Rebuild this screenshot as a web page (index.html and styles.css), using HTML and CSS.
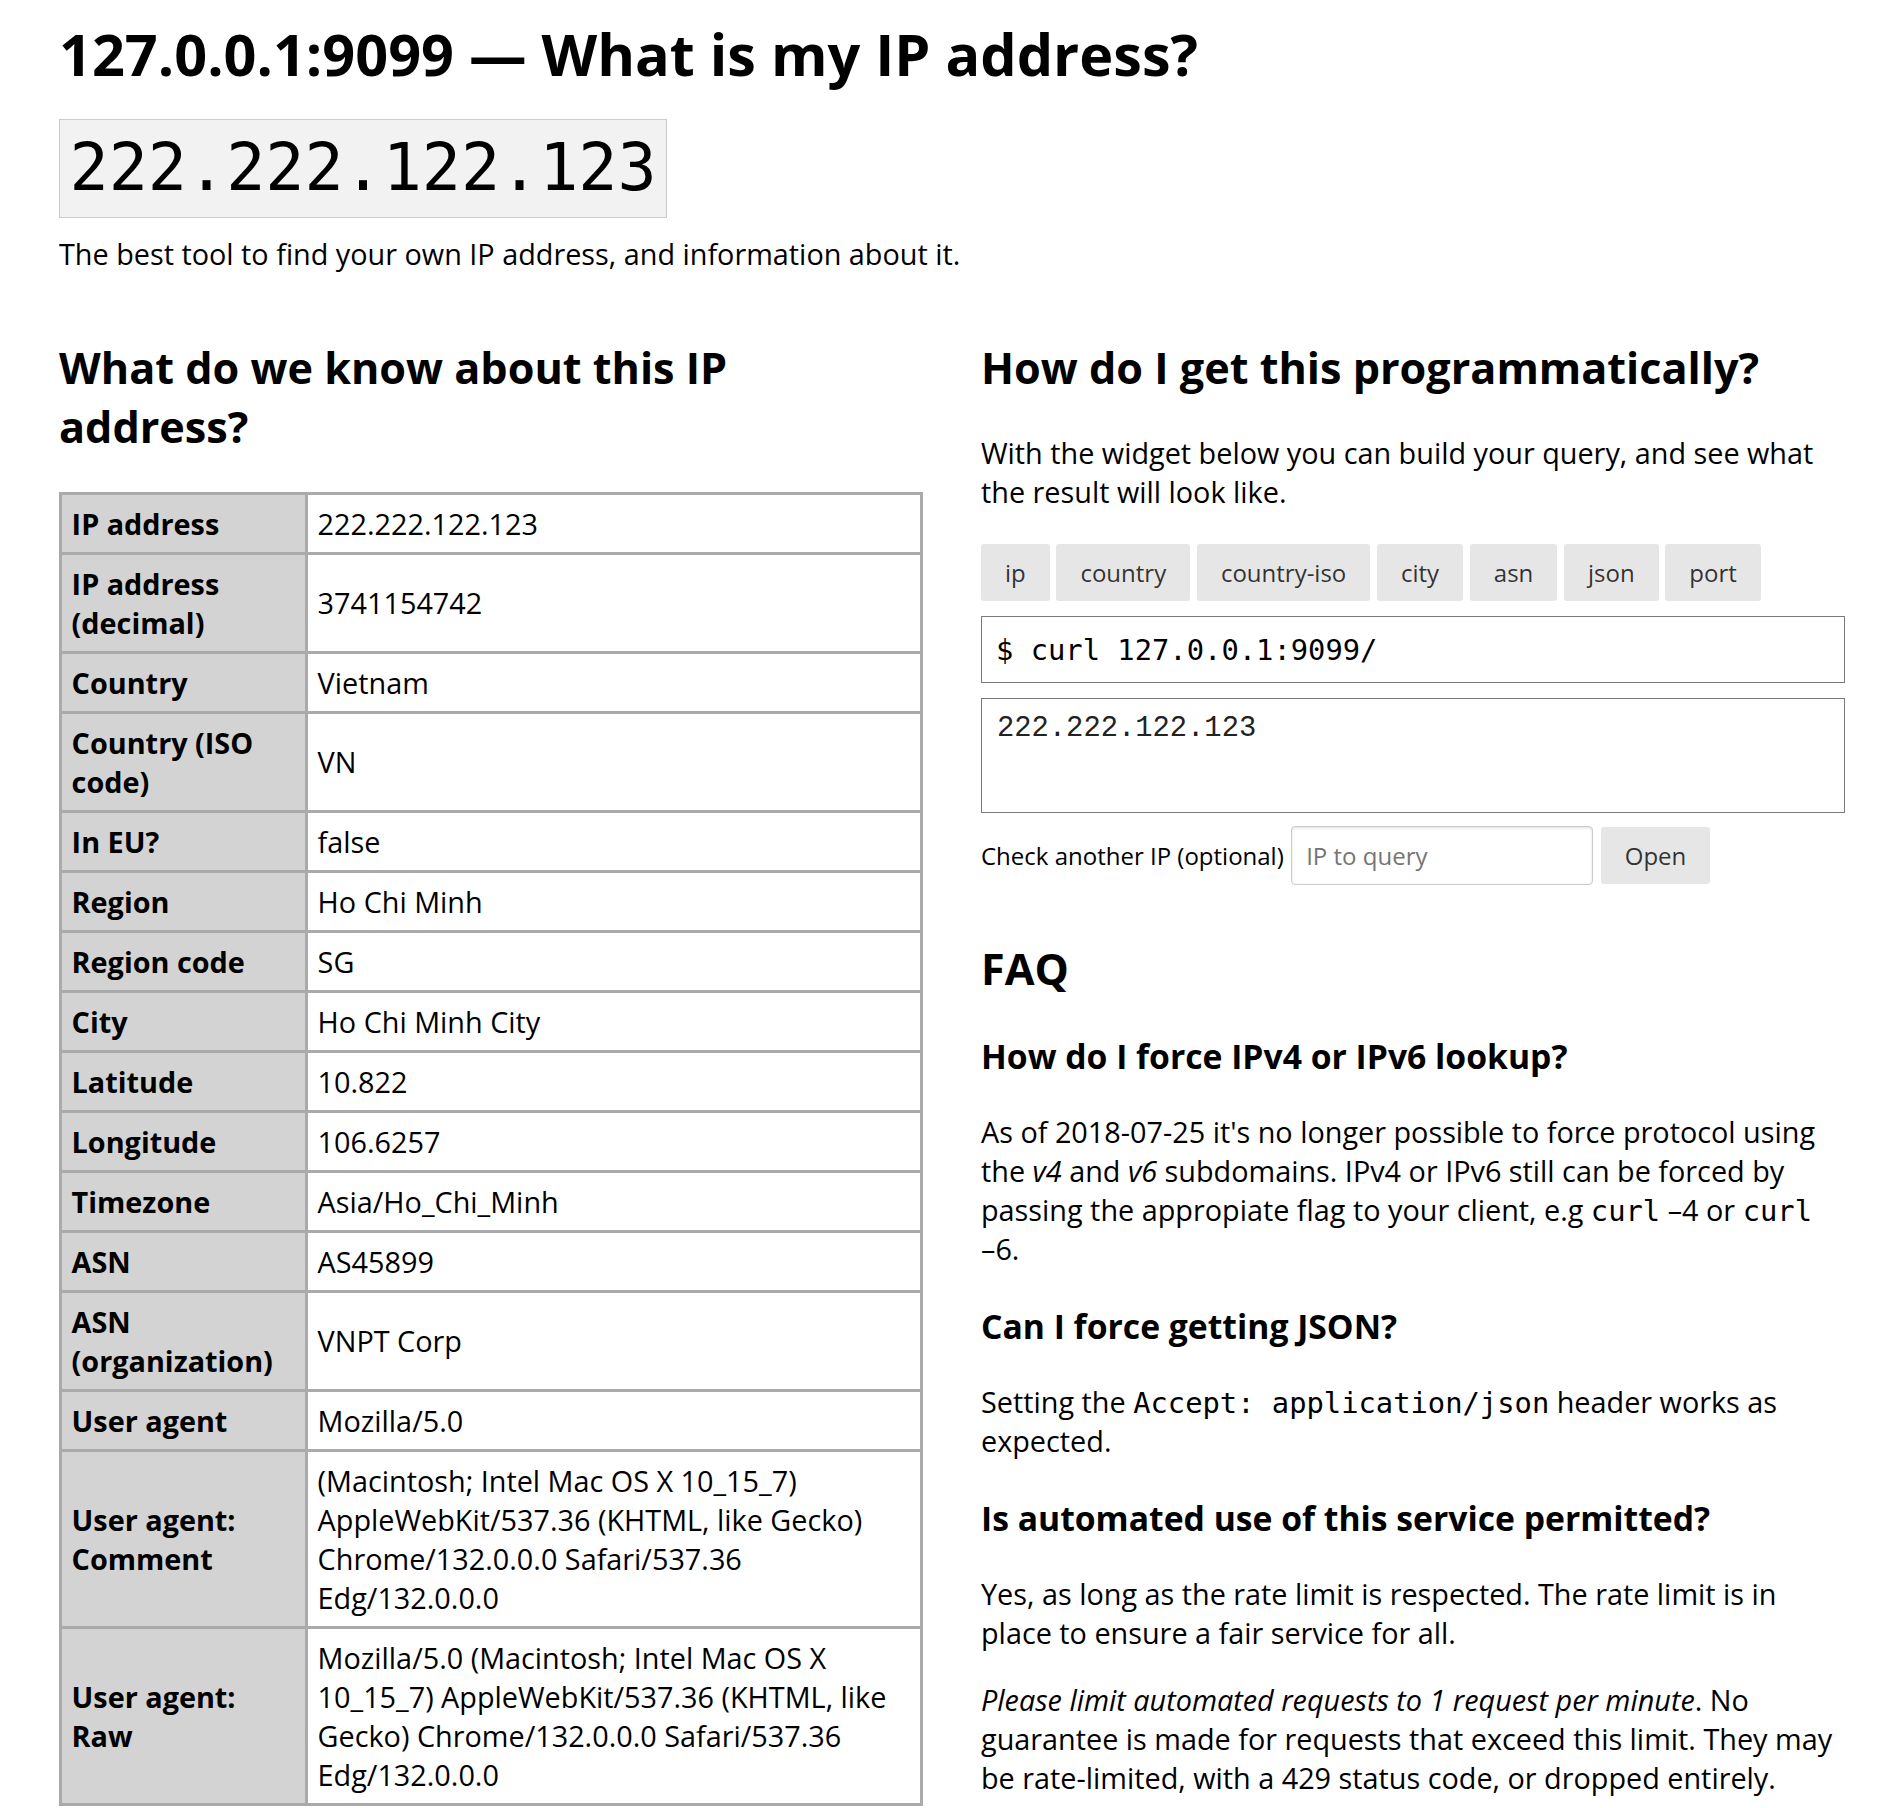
FILE: index.html
```html
<!DOCTYPE html>
<html lang="en">
<head>
<meta charset="utf-8">
<title>127.0.0.1:9099 — What is my IP address?</title>
<link rel="stylesheet" href="styles.css">
</head>
<body>
<div class="page">
  <header class="intro">
    <h1 class="title">127.0.0.1:9099 — What is my IP address?</h1>
    <div class="ip-line"><code class="ip">222.222.122.123</code></div>
    <p class="tagline">The best tool to find your own IP address, and information about it.</p>
  </header>

  <div class="cols">
    <section class="col">
      <h2 class="h2 h2-narrow">What do we know about this IP address?</h2>
      <table class="info">
        <colgroup><col class="c-key"><col></colgroup>
        <tbody>
          <tr><th>IP address</th><td>222.222.122.123</td></tr>
          <tr><th>IP address (decimal)</th><td>3741154742</td></tr>
          <tr><th>Country</th><td>Vietnam</td></tr>
          <tr><th>Country (ISO code)</th><td>VN</td></tr>
          <tr><th>In EU?</th><td>false</td></tr>
          <tr><th>Region</th><td>Ho Chi Minh</td></tr>
          <tr><th>Region code</th><td>SG</td></tr>
          <tr><th>City</th><td>Ho Chi Minh City</td></tr>
          <tr><th>Latitude</th><td>10.822</td></tr>
          <tr><th>Longitude</th><td>106.6257</td></tr>
          <tr><th>Timezone</th><td>Asia/Ho_Chi_Minh</td></tr>
          <tr><th>ASN</th><td>AS45899</td></tr>
          <tr><th>ASN (organization)</th><td>VNPT Corp</td></tr>
          <tr><th>User agent</th><td>Mozilla/5.0</td></tr>
          <tr><th>User agent: Comment</th><td>(Macintosh; Intel Mac OS X 10_15_7) AppleWebKit/537.36 (KHTML, like Gecko) Chrome/132.0.0.0 Safari/537.36 Edg/132.0.0.0</td></tr>
          <tr><th>User agent: Raw</th><td>Mozilla/5.0 (Macintosh; Intel Mac OS X 10_15_7) AppleWebKit/537.36 (KHTML, like Gecko) Chrome/132.0.0.0 Safari/537.36 Edg/132.0.0.0</td></tr>
        </tbody>
      </table>
    </section>

    <section class="col">
      <h2 class="h2">How do I get this programmatically?</h2>
      <p class="lead">With the widget below you can build your query, and see what the result will look like.</p>
      <div class="btns">
        <button class="btn" type="button">ip</button>
        <button class="btn" type="button">country</button>
        <button class="btn" type="button">country-iso</button>
        <button class="btn" type="button">city</button>
        <button class="btn" type="button">asn</button>
        <button class="btn" type="button">json</button>
        <button class="btn" type="button">port</button>
      </div>
      <pre class="cmd">$ curl 127.0.0.1:9099/</pre>
      <pre class="output">222.222.122.123</pre>
      <form class="check">
        <label class="check-label" for="ipq">Check another IP (optional)</label>
        <input id="ipq" class="check-input" type="text" placeholder="IP to query">
        <button class="btn" type="button">Open</button>
      </form>

      <h2 class="h2 faq">FAQ</h2>
      <h3 class="h3">How do I force IPv4 or IPv6 lookup?</h3>
      <p class="p">As of 2018-07-25 it's no longer possible to force protocol using the <em>v4</em> and <em>v6</em> subdomains. IPv4 or IPv6 still can be forced by passing the appropiate flag to your client, e.g <code class="code">curl</code> <span class="nw">–4</span> or <code class="code">curl</code> <span class="nw">–6.</span></p>
      <h3 class="h3">Can I force getting JSON?</h3>
      <p class="p">Setting the <code class="code">Accept: application/json</code> header works as expected.</p>
      <h3 class="h3">Is automated use of this service permitted?</h3>
      <p class="p">Yes, as long as the rate limit is respected. The rate limit is in place to ensure a fair service for all.</p>
      <p class="p"><em>Please limit automated requests to 1 request per minute</em>. No guarantee is made for requests that exceed this limit. They may be rate-limited, with a 429 status code, or dropped entirely.</p>
    </section>
  </div>
</div>
</body>
</html>
```

FILE: styles.css
```css
html, body {
  margin: 0;
  padding: 0;
  background: #fff;
}

body {
  font-family: "Open Sans", "Noto Sans", sans-serif;
  font-size: 28.8px;
  line-height: normal;
  color: #000;
}

.page {
  padding: 0 47px 0 59px;
}

.title {
  font-size: 57.6px;
  font-weight: 700;
  line-height: normal;
  margin: 13.5px 0 0;
}

.ip-line {
  display: flex;
  margin-top: 26px;
}

.ip {
  font-family: "DejaVu Sans Mono", monospace;
  font-size: 65px;
  line-height: 78px;
  padding: 9.6px 9.6px;
  background: #f2f2f2;
  border: 1px solid #cbcbcb;
}

.tagline {
  margin: 16.5px 0 0;
}

.cols {
  display: grid;
  grid-template-columns: 864px 864px;
  column-gap: 58px;
  margin-top: 65px;
}

.h2 {
  font-size: 43.2px;
  font-weight: 700;
  line-height: normal;
  margin: 0 0 35.5px;
}

.h2-narrow {
  max-width: 780px;
}

.info {
  width: 100%;
  border-collapse: collapse;
  table-layout: fixed;
  margin-top: 2.5px;
}

.c-key {
  width: 246px;
}

.info th,
.info td {
  border: 3px solid #aaa;
  padding: 9px 9.6px;
  text-align: left;
  vertical-align: middle;
  font-size: 28.8px;
  line-height: normal;
}

.info th {
  background: #d3d3d3;
  font-weight: 700;
}

.lead {
  margin: 0 0 33.5px;
}

.btns {
  display: flex;
  gap: 6.7px;
}

.btn {
  font-family: "Open Sans", "Noto Sans", sans-serif;
  font-size: 24px;
  line-height: normal;
  padding: 12px 24px;
  background: #e6e6e6;
  color: rgba(0, 0, 0, 0.8);
  border: none;
  border-radius: 3px;
  margin: 0;
}

.cmd {
  margin: 15.3px 0 0;
  font-family: "DejaVu Sans Mono", monospace;
  font-size: 28.8px;
  line-height: normal;
  color: #000;
  border: 1px solid #7a7a7a;
  padding: 15.4px 14px;
}

.output {
  margin: 15px 0 0;
  box-sizing: border-box;
  height: 114.7px;
  font-family: "Liberation Mono", monospace;
  font-size: 28.8px;
  line-height: normal;
  color: #222;
  border: 1px solid #7a7a7a;
  padding: 13.2px 15px;
}

.check {
  display: flex;
  align-items: center;
  margin-top: 13.3px;
}

.check-label {
  font-size: 24px;
  margin-right: 7px;
}

.check-input {
  box-sizing: border-box;
  width: 302px;
  font-family: "Open Sans", "Noto Sans", sans-serif;
  font-size: 24px;
  line-height: normal;
  padding: 12px 14.4px;
  border: 1px solid #ccc;
  border-radius: 4px;
  box-shadow: inset 0 1px 3px #ddd;
  margin: 0 8px 0 0;
  color: #000;
}

.check-input::placeholder {
  color: #757575;
}

.faq {
  margin-top: 53.6px;
}

.h3 {
  font-size: 33.7px;
  font-weight: 700;
  line-height: normal;
  margin: 35px 0 33px;
}

.p {
  margin: 0 0 28px;
}

.code {
  font-family: "DejaVu Sans Mono", monospace;
  font-size: 28.8px;
}

.nw {
  white-space: nowrap;
}
```
